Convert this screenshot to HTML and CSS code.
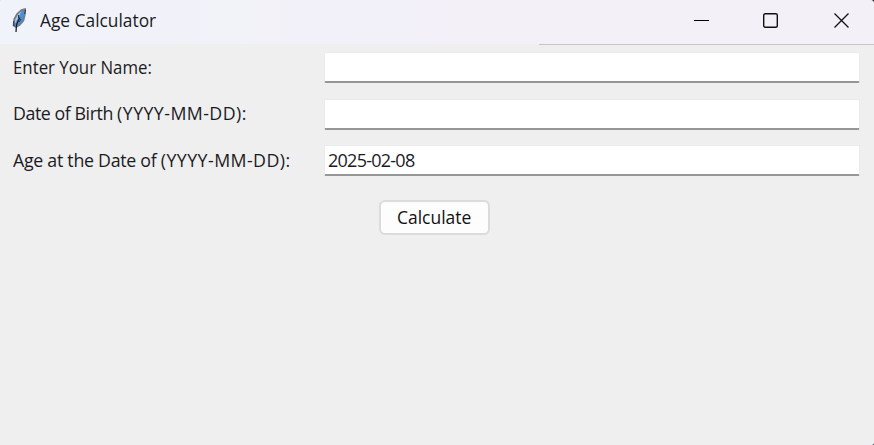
FILE: index.html
```html
<!DOCTYPE html>
<html lang="en">
<head>
<meta charset="utf-8">
<title>Age Calculator</title>
<link rel="stylesheet" href="styles.css">
</head>
<body>
<div class="window">
  <header class="titlebar">
    <svg class="feather" width="16" height="25" viewBox="0 0 16 25">
      <path d="M13 1 9.500 2 5 6 2.200 11 1.500 17.500l2.500 1.500 3.500-2 4-4.500L13 6z" fill="#4a8fdc" stroke="#777b80" stroke-width="1.600"/>
      <path d="M9.500 3 6 6.500 3.500 11l-.8 5 2.300-4z" fill="#b9cadb"/>
      <path d="M8 9.500 6 13l-1.500 4-.5 7" fill="none" stroke="#15202e" stroke-width="1.300"/>
      <path d="M13.500 1.500 12.800 6M1.800 13v5M6.500 7v3M9 11l-2 3" fill="none" stroke="#28313c" stroke-width="1"/>
    </svg>
    <h1 class="title"><span class="text">Age Calculator</span></h1>
    <div class="controls">
      <svg width="15" height="15" viewBox="0 0 15 15"><path d="M0 7.500h15" stroke="#000"/></svg>
      <svg width="15" height="15" viewBox="0 0 15 15"><rect x=".7" y=".7" width="13.600" height="13.600" rx="1.500" fill="none" stroke="#111" stroke-width="1.400"/></svg>
      <svg width="15" height="15" viewBox="0 0 15 15"><path d="m.5.5 14 14m0-14-14 14" stroke="#111" stroke-width="1.300"/></svg>
    </div>
  </header>
  <main class="form">
    <div class="row"><label class="text name" for="name">Enter Your Name:</label><input id="name" type="text"></div>
    <div class="row"><label class="text" for="birth"><span class="caption">Date of Birth </span><span class="format">(YYYY-MM-DD):</span></label><input id="birth" type="text"></div>
    <div class="row"><label class="text" for="until"><span class="caption long">Age at the Date of </span><span class="format">(YYYY-MM-DD):</span></label><input id="until" type="text" value="2025-02-08"></div>
    <button type="button"><span class="text">Calculate</span></button>
  </main>
</div>
</body>
</html>
```
FILE: styles.css
```css
* { box-sizing: border-box; }
body { margin: 0; background: #2b2933; font-family: "Open Sans", "Noto Sans", sans-serif; color: #1b1b1f; }
.window { height: 445px; background: #efefef; border-radius: 1px 4px 2px 0; overflow: hidden; }
.titlebar { display: flex; align-items: center; height: 44px; padding: 0 25px 4px 12px; background: linear-gradient(90deg, #f0f3f9, #f3f0f8 55%, #f3f0f7); }
.feather { flex: none; margin-top: 1px; }
.title { margin: 0 0 0 12px; font-size: 18px; font-weight: 400; line-height: 24px; }
.text { display: inline-block; white-space: nowrap; transform-origin: left center; }
.title .text { transform: scaleX(.963); }
.controls { display: flex; gap: 56px; margin-left: auto; }
.controls svg:first-child { margin-right: -2px; }
.form { display: flex; flex-direction: column; align-items: flex-start; padding: 8px 14px 0 13px; }
.form::before { content: ""; align-self: flex-end; flex: none; width: 335px; height: 1px; margin: -8px -14px 7px 0; background: #c6c4ca; }
.row { display: grid; grid-template-columns: 311px 1fr; align-items: center; width: 100%; height: 30px; margin-bottom: 16.500px; }
label { justify-self: start; margin-top: -2px; font-size: 18px; line-height: 26px; transform: scaleX(.987); }
label.name { transform: scaleX(.934); }
.caption { letter-spacing: -.43px; }
.caption.long { letter-spacing: -.28px; }
.format { letter-spacing: .44px; }
input { width: 536px; height: 31px; padding: 0 3px; border: 1px solid #ebebeb; border-bottom: 2px solid #969696; border-radius: 2px; outline: 0; background: #fff; color: #1b1b1f; font: 18px "Open Sans", sans-serif; letter-spacing: -.75px; }
button { width: 111px; height: 35px; margin: 8px 0 0 366px; padding: 0 0 0 16px; border: 2px solid #dbdbdb; border-radius: 6px; background: #fdfdfd; color: #111; font: 18px "Open Sans", sans-serif; text-align: left; }
button .text { transform: scaleX(.97); }
```
